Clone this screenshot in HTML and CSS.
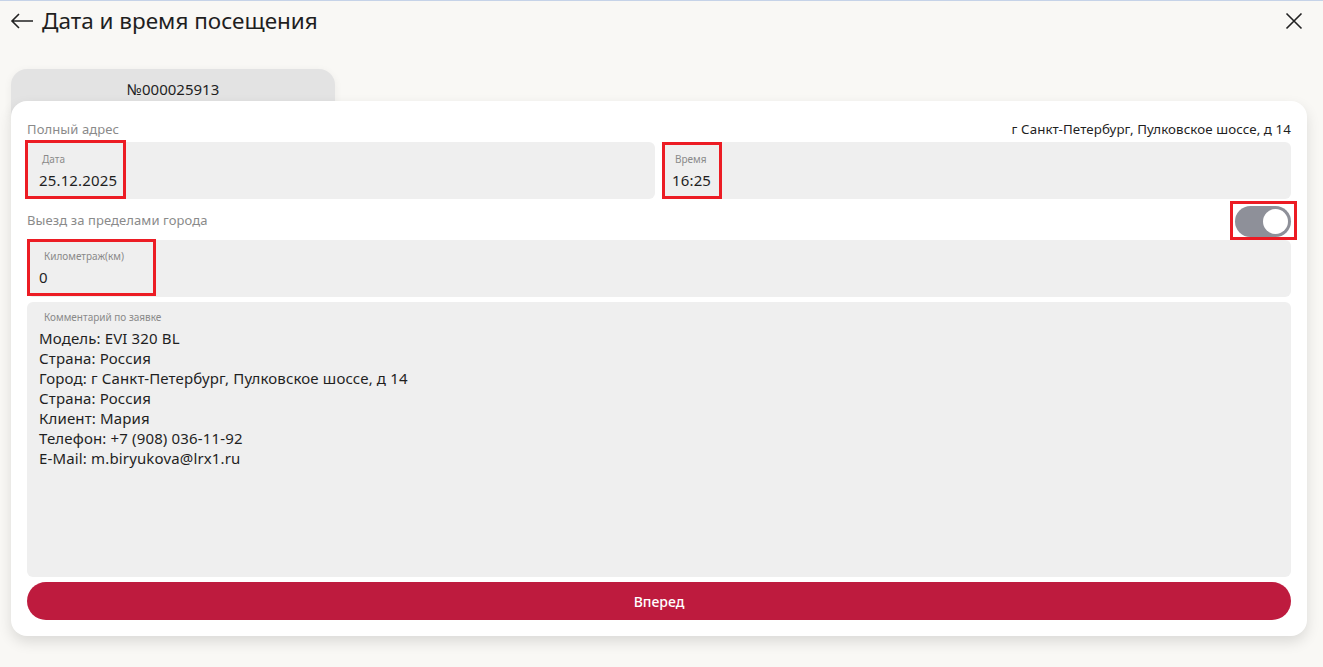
FILE: index.html
```html
<!DOCTYPE html>
<html lang="ru">
<head>
<meta charset="utf-8">
<link rel="stylesheet" href="styles.css">
</head>
<body>
<div class="page">
  <header class="header">
    <div class="title-wrap">
      <svg class="back" width="24" height="16" viewBox="0 0 24 16"><path d="M9 1 L2 8 L9 15 M2 8 H23" fill="none" stroke="#222" stroke-width="1.6"/></svg>
      <h1 class="title">Дата и время посещения</h1>
    </div>
    <svg class="close" width="18" height="18" viewBox="0 0 18 18"><path d="M1.5 1.5 L16.5 16.5 M16.5 1.5 L1.5 16.5" fill="none" stroke="#222" stroke-width="1.6"/></svg>
  </header>

  <div class="tab">№000025913</div>

  <main class="card">
    <div class="row-label">
      <span class="muted">Полный адрес</span>
      <span class="addr">г Санкт-Петербург, Пулковское шоссе, д 14</span>
    </div>
    <div class="two">
      <div class="field">
        <div class="mark mark-date">
          <div class="flabel">Дата</div>
          <div class="fvalue">25.12.2025</div>
        </div>
      </div>
      <div class="field">
        <div class="mark mark-time">
          <div class="flabel">Время</div>
          <div class="fvalue">16:25</div>
        </div>
      </div>
    </div>
    <div class="row-toggle">
      <span class="muted">Выезд за пределами города</span>
      <div class="mark mark-toggle"><div class="toggle"><div class="knob"></div></div></div>
    </div>
    <div class="field field-km">
      <div class="mark mark-km">
        <div class="flabel">Километраж(км)</div>
        <div class="fvalue">0</div>
      </div>
    </div>
    <div class="field comment">
      <div class="clabel">Комментарий по заявке</div>
      <div class="ctext">Модель: EVI 320 BL<br>Страна: Россия<br>Город: г Санкт-Петербург, Пулковское шоссе, д 14<br>Страна: Россия<br>Клиент: Мария<br>Телефон: +7 (908) 036-11-92<br>E-Mail: m.biryukova@lrx1.ru</div>
    </div>
    <button class="btn">Вперед</button>
  </main>
</div>
</body>
</html>
```
FILE: styles.css
```css
* { box-sizing: border-box; }
html, body { margin: 0; padding: 0; }
body {
  background: #f9f8f5;
  font-family: "Noto Sans", "Open Sans", sans-serif;
  color: #1f1f1f;
  border-top: 1px solid #c6d3e8;
  height: 667px;
  overflow: hidden;
}
.page { padding: 0 16px 0 11px; }
.header {
  height: 40px;
  display: flex;
  justify-content: space-between;
  align-items: flex-start;
}
.title-wrap { display: flex; align-items: center; gap: 8px; margin-left: -1px; padding-top: 5px; }
.back { display: block; }
.title {
  margin: 0;
  font-weight: 400;
  font-size: 22.5px;
  line-height: 30px;
  color: #1f1f1f;
}
.close { margin-top: 11px; margin-right: 4px; }
.tab {
  margin-top: 28px;
  width: 324px;
  height: 48px;
  background: #e3e3e3;
  border-radius: 16px 16px 0 0;
  text-align: center;
  font-size: 15px;
  line-height: 20px;
  padding-top: 10px;
  color: #1f1f1f;
  box-shadow: 0 2px 8px rgba(0,0,0,0.06);
}
.card {
  position: relative;
  margin-top: -16px;
  background: #fff;
  border-radius: 16px;
  height: 535px;
  padding: 16px 16px 16px 16px;
  box-shadow: 0 6px 14px rgba(0,0,0,0.12);
  display: flex;
  flex-direction: column;
}
.row-label {
  display: flex;
  justify-content: space-between;
  align-items: center;
  height: 23px;
  font-size: 13px;
  padding-top: 0;
  letter-spacing: 0.1px;
}
.muted { color: #8a8a8a; }
.addr { color: #1f1f1f; font-size: 13.3px; }
.two { display: flex; gap: 8px; margin-top: 2px; }
.two .field { flex: 1; }
.field {
  background: #efefef;
  border-radius: 6px;
  height: 57px;
}
.mark {
  border: 3px solid #ec1c24;
}
.mark-date {
  width: 101px;
  height: 59px;
  margin: -2px 0 0 -2px;
  padding: 9px 0 0 14px;
}
.mark-time {
  width: 60px;
  height: 57px;
  margin-left: -1px;
  padding: 7px 0 0 10px;
}
.mark-km {
  width: 129px;
  height: 57px;
  margin-top: -1px;
  padding: 7px 0 0 14px;
}
.flabel {
  font-size: 10px;
  line-height: 14px;
  color: #8a8a8a;
}
.fvalue {
  font-size: 15px;
  line-height: 20px;
  margin-top: 4px;
  margin-left: -3px;
  letter-spacing: 0.15px;
}
.mark-time .fvalue { margin-left: -3px; }
.mark-km .fvalue { margin-left: -5px; margin-top: 4px; }
.row-toggle {
  display: flex;
  justify-content: space-between;
  align-items: center;
  height: 41px;
  font-size: 13px;
  letter-spacing: 0.1px;
}
.mark-toggle {
  width: 67px;
  height: 39px;
  flex: none;
  margin-right: -6px;
  margin-top: 1px;
  padding: 2px 0 0 2px;
}
.toggle {
  width: 56px;
  height: 31px;
  border-radius: 16px;
  background: #8e9099;
  position: relative;
}
.knob {
  position: absolute;
  right: 3px;
  top: 3px;
  width: 25px;
  height: 25px;
  border-radius: 50%;
  background: #fff;
}
.comment {
  margin-top: 5px;
  height: 275px;
  padding: 8px 12px 0 12px;
}
.clabel {
  font-size: 10px;
  line-height: 14px;
  color: #8a8a8a;
  padding-left: 5px;
}
.ctext {
  font-size: 15px;
  line-height: 20px;
  margin-top: 4px;
  letter-spacing: 0.15px;
}
.btn {
  margin-top: 5px;
  height: 38px;
  border: none;
  border-radius: 19px;
  background: #be1b3e;
  color: #fff;
  font-family: inherit;
  font-size: 14px;
  font-weight: 500;
  width: 100%;
}
```
